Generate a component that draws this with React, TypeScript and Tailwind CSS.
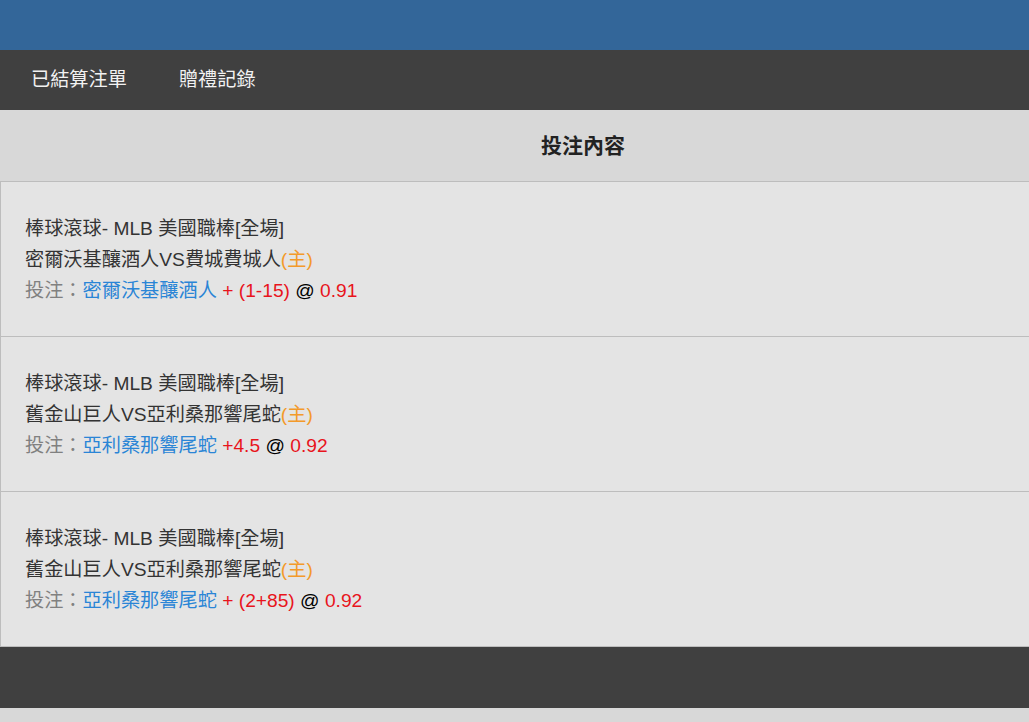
const FONT = "font-['Liberation_Sans','Noto_Sans_CJK_TC',sans-serif]"

interface Bet {
  league: string
  home: string
  away: string
  pick: string
  line: string
  odds: string
}

const bets: Bet[] = [
  {
    league: '棒球滾球- MLB 美國職棒[全場]',
    away: '密爾沃基釀酒人',
    home: '費城費城人',
    pick: '密爾沃基釀酒人',
    line: '+ (1-15)',
    odds: '0.91',
  },
  {
    league: '棒球滾球- MLB 美國職棒[全場]',
    away: '舊金山巨人',
    home: '亞利桑那響尾蛇',
    pick: '亞利桑那響尾蛇',
    line: '+4.5',
    odds: '0.92',
  },
  {
    league: '棒球滾球- MLB 美國職棒[全場]',
    away: '舊金山巨人',
    home: '亞利桑那響尾蛇',
    pick: '亞利桑那響尾蛇',
    line: '+ (2+85)',
    odds: '0.92',
  },
]

export default function App() {
  return (
    <div className={`${FONT} min-h-[722px] bg-[#d8d8d8]`}>
      <div className="h-[50px] bg-[#336699]" />

      <nav className="flex h-[60px] items-center bg-[#404040] pl-[31px] text-[19.2px] text-[#f2f2f2]">
        <span>已結算注單</span>
        <span className="ml-[52px]">贈禮記錄</span>
      </nav>

      {/* ── Table header ── */}
      <div className="flex h-[72px] items-center border-b border-[#bdbdbd] bg-[#d8d8d8] pl-[541px] text-[21px] font-bold text-[#222]">
        投注內容
      </div>

      {bets.map((bet, i) => (
        <div
          key={i}
          className="border-b border-l border-[#bdbdbd] bg-[#e4e4e4] pt-[31px] pb-[30px] pl-[24px] text-[19.2px] leading-[31px] text-[#333]"
        >
          <p>{bet.league}</p>
          <p>
            {bet.away}VS{bet.home}
            <span className="text-[#f39a2a]">(主)</span>
          </p>
          <p>
            <span className="text-[#808080]">投注：</span>
            <span className="text-[#2a85d6]">{bet.pick}</span>{' '}
            <span className="text-[#e8141c]">{bet.line}</span>{' '}
            <span className="text-black">@</span>{' '}
            <span className="text-[#e8141c]">{bet.odds}</span>
          </p>
        </div>
      ))}

      <div className="h-[61px] bg-[#404040]" />
    </div>
  )
}
